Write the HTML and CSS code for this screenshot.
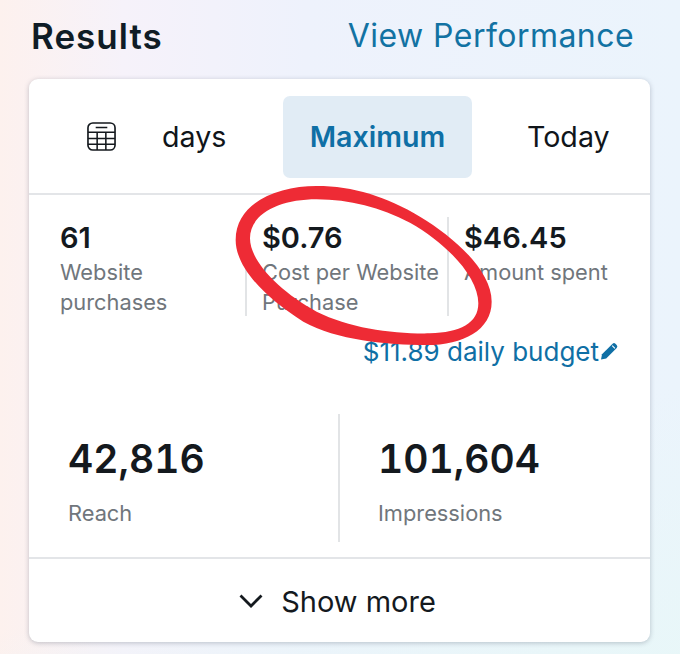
FILE: index.html
```html
<!DOCTYPE html>
<html lang="en">
<head>
<meta charset="utf-8">
<title>Results</title>
<link rel="stylesheet" href="styles.css">
</head>
<body>
<main class="stage">
  <header class="head">
    <h1 class="title">Results</h1>
    <a class="view-link">View Performance</a>
  </header>
  <section class="card">
    <nav class="tabs">
      <div class="tab tab-days">
        <svg class="cal" viewBox="0 0 30 30" width="29" height="29" aria-hidden="true">
          <rect x="1" y="1" width="28" height="28" rx="5" fill="none" stroke="#14191e" stroke-width="1.7"/>
          <path d="M9 5.6h12M1 10.5h28M1 17h28M1 23h28M10.5 10.5V29M19.5 10.5V29" fill="none" stroke="#14191e" stroke-width="1.6"/>
        </svg>
        <span>days</span>
      </div>
      <div class="tab tab-active">Maximum</div>
      <div class="tab tab-today">Today</div>
    </nav>
    <div class="metrics">
      <div class="metric metric-first">
        <div class="value">61</div>
        <div class="label">Website<br>purchases</div>
      </div>
      <div class="metric metric-rule">
        <div class="value">$0.76</div>
        <div class="label">Cost per Website<br>Purchase</div>
      </div>
      <div class="metric metric-rule">
        <div class="value">$46.45</div>
        <div class="label">Amount spent</div>
      </div>
    </div>
    <div class="budget">
      <span>$11.89 daily budget</span>
      <svg class="pencil" viewBox="0 0 20 20" width="20" height="20" aria-hidden="true">
        <path d="M2 18.5l1-5.2L13.6 2.8a2 2 0 0 1 2.8 0l1.3 1.3a2 2 0 0 1 0 2.8L7.2 17.4z" fill="#0f6fa5"/>
        <path d="M13.2 4.6l2.7 2.7" stroke="#fff" stroke-width="1.1" fill="none"/>
      </svg>
    </div>
    <div class="totals">
      <div class="total total-reach">
        <div class="big">42,816</div>
        <div class="sub">Reach</div>
      </div>
      <div class="total total-impr">
        <div class="big">101,604</div>
        <div class="sub">Impressions</div>
      </div>
    </div>
    <div class="more">
      <svg class="chev" viewBox="0 0 24 16" width="24" height="16" aria-hidden="true">
        <path d="M1.5 2.5L12 13L22.5 2.5" fill="none" stroke="#14191e" stroke-width="2.8"/>
      </svg>
      <span>Show more</span>
    </div>
  </section>
  <svg class="circle" viewBox="0 0 680 654" width="680" height="654" aria-hidden="true">
    <g transform="translate(220 180) scale(0.33333)">
      <path fill="#ee2b35" fill-rule="evenodd" d="M290 18C170 18 47 70 47 180C47 260 130 350 250 425C350 480 500 495 620 495C730 495 815 450 815 365C815 270 700 170 600 110C500 50 400 18 290 18ZM290 58C180 58 90 100 90 175C90 245 180 335 290 395C390 445 520 462 630 460C720 458 775 430 775 370C775 290 680 190 570 128C480 83 390 58 290 58Z"/>
    </g>
  </svg>
</main>
</body>
</html>
```
FILE: styles.css
```css
* { box-sizing: border-box; }
html, body { margin: 0; padding: 0; }
body {
  width: 680px;
  height: 654px;
  overflow: hidden;
  font-family: "Inter", "Noto Sans", sans-serif;
  background:
    linear-gradient(160deg, rgba(255,255,255,0) 70%, rgba(232,247,248,0.9) 100%),
    linear-gradient(90deg, #fdf1ee 0%, #f6f2fa 18%, #eef2fc 45%, #ebf4fc 100%);
}
.stage { position: relative; width: 680px; height: 654px; padding: 0 30px 0 29px; }
.head {
  display: flex;
  justify-content: space-between;
  align-items: center;
  height: 79px;
  padding: 0 16px 8px 2px;
}
.title { margin: 0; font-size: 35px; font-weight: 600; letter-spacing: 1px; color: #0f1c26; }
.view-link { font-size: 32px; letter-spacing: 0.45px; color: #1272a3; }
.card {
  width: 621px;
  height: 563px;
  background: #fff;
  border-radius: 9px;
  box-shadow: 0 1px 5px rgba(60,70,90,0.3);
}
.tabs {
  display: flex;
  align-items: center;
  height: 116px;
  padding: 1px 0 0 58px;
  border-bottom: 2px solid #e3e5e8;
}
.tab { font-size: 28.6px; color: #10151a; }
.tab-days { display: flex; align-items: center; gap: 46px; width: 196px; }
.tab-active {
  display: flex;
  align-items: center;
  justify-content: center;
  width: 189px;
  height: 82px;
  background: #e1ecf5;
  border-radius: 7px;
  font-weight: 600;
  color: #0f6fa5;
}
.tab-today { margin-left: 55px; }
.cal { display: block; }
.metrics { display: flex; height: 122px; padding: 22px 0 0 14px; }
.metric { width: 202px; height: 99px; padding: 2px 0 0 15px; }
.metric-first { padding-left: 17px; }
.metric-rule { border-left: 2px solid #e2e4e6; }
.value { font-size: 29px; font-weight: 600; line-height: 38px; color: #14191e; }
.label { font-size: 21.8px; line-height: 30px; color: #70767c; }
.budget {
  display: flex;
  justify-content: flex-end;
  align-items: center;
  height: 40px;
  margin-top: 14px;
  padding-right: 31px;
  font-size: 26px;
  color: #0f6fa5;
}
.pencil { display: block; }
.totals { display: flex; height: 128px; margin-top: 43px; }
.total { height: 128px; }
.total-reach { width: 311px; padding-left: 39px; border-right: 2px solid #e2e4e6; }
.total-impr { padding-left: 38px; }
.big { font-size: 39px; font-weight: 600; font-feature-settings: "tnum"; line-height: 58px; margin-top: 16px; color: #14191e; }
.sub { font-size: 21.8px; line-height: 30px; margin-top: 10px; color: #70767c; }
.more {
  display: flex;
  justify-content: center;
  align-items: center;
  gap: 18px;
  height: 85px;
  margin-top: 15px;
  padding: 1px 4px 0 0;
  border-top: 2px solid #e3e5e8;
  font-size: 29px;
  color: #14191e;
}
.chev { display: block; }
.circle { position: absolute; left: 0; top: 0; pointer-events: none; }
```
